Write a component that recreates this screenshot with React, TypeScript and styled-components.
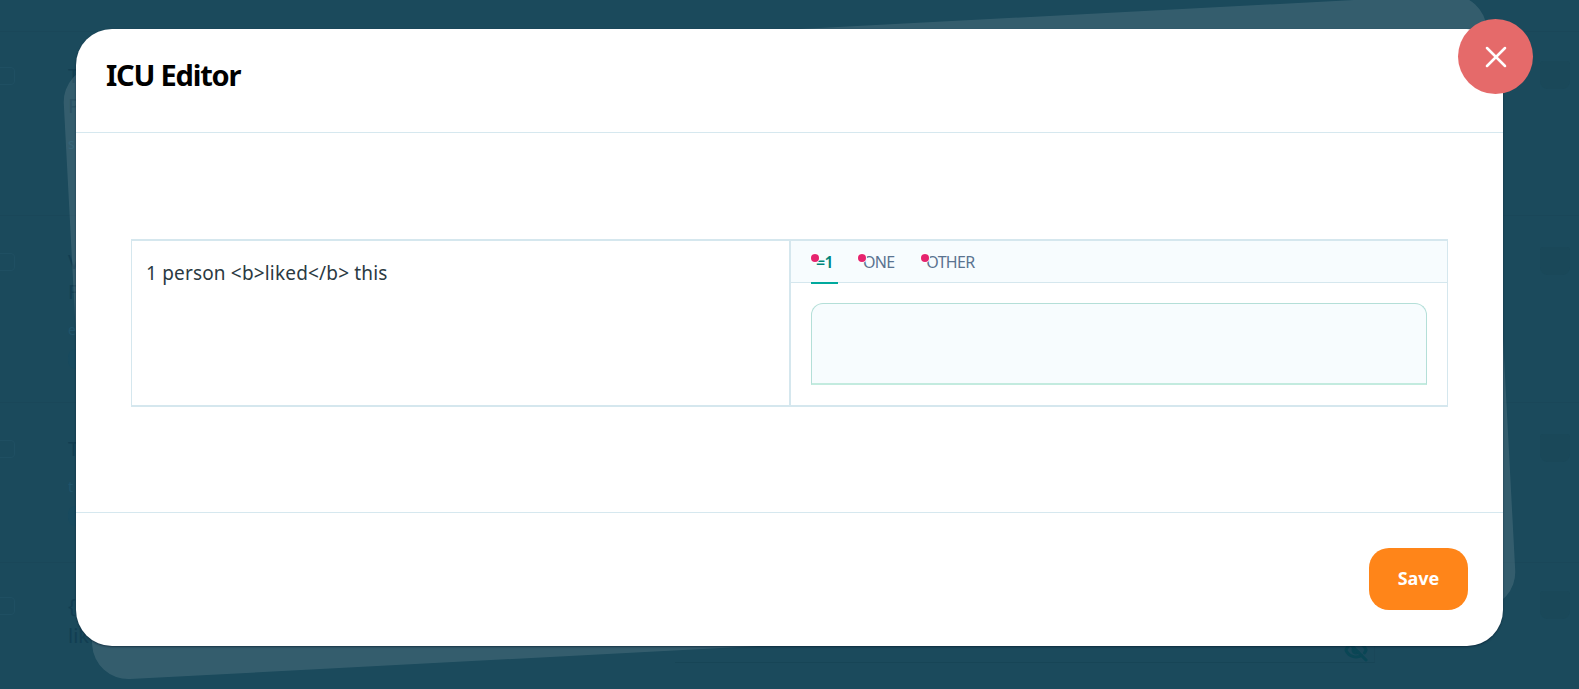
import React from "react";
import styled, { createGlobalStyle } from "styled-components";
import { X, EyeOff } from "lucide-react";

const Global = createGlobalStyle`
  html, body { margin: 0; padding: 0; height: 100%; overflow: hidden; background: #1b4a5c; }
  * { box-sizing: border-box; }
  body { font-family: "Noto Sans", "Open Sans", sans-serif; }
`;

const Page = styled.div`
  position: relative;
  width: 1579px;
  height: 689px;
  overflow: hidden;
  background: #1b4a5c;
`;

const BackList = styled.div`
  display: flex;
  flex-direction: column;
  height: 689px;
  padding-top: 31px;
  color: #123e52;
  font-size: 20px;
  line-height: 30px;
`;

const BackRow = styled.div<{ $h: number; $pad: number }>`
  display: grid;
  grid-template-columns: 68px 60px 1fr 30px;
  align-items: start;
  height: ${(p) => p.$h}px;
  padding: ${(p) => p.$pad}px 9px 0 0;
  border-top: 1px solid #1a4759;
`;

const BackCheck = styled.div`
  width: 30px;
  height: 18px;
  margin: 6px 0 0 -15px;
  border: 1px solid #1f4f62;
  border-radius: 4px;
`;

const BackBadge = styled.div`
  width: 30px;
  height: 28px;
  border-radius: 3px 3px 8px 8px;
  background: #1a4859;
`;

const BackMuted = styled.div`
  margin-top: 10px;
  font-size: 14px;
  line-height: 26px;
  color: #20546a;
`;

const BackPill = styled.div`
  width: 40px;
  height: 20px;
  margin-top: 6px;
  border-radius: 8px;
  background: #184a5e;
`;

const BackSplit = styled.div`
  display: flex;
`;

const BackPanel = styled.div`
  width: 700px;
  height: 100px;
  margin: -28px 165px 0 auto;
  padding-right: 6px;
  display: flex;
  align-items: flex-end;
  justify-content: flex-end;
  color: #0a4655;
  border-right: 1px solid #1a4759;
  border-bottom: 1px solid #174556;
`;

const Backdrop = styled.div`
  position: absolute;
  inset: 0;
  display: flex;
  align-items: flex-start;
  justify-content: center;
  padding-top: 29px;
`;

const Tilted = styled.div`
  position: absolute;
  left: 77px;
  top: 30px;
  width: 1425px;
  height: 614px;
  border-radius: 36px;
  background: rgba(255, 255, 255, 0.11);
  transform: rotate(-3deg);
`;

const Dialog = styled.div`
  position: relative;
  width: 1427px;
  height: 617px;
  background: #fff;
  border-radius: 36px;
  display: flex;
  flex-direction: column;
  box-shadow: 0 1px 2px rgba(0, 20, 40, 0.55);
`;

const Close = styled.button`
  position: absolute;
  top: -10px;
  right: -30px;
  width: 75px;
  height: 75px;
  border: 0;
  padding: 0;
  border-radius: 50%;
  background: #e56a6a;
  color: #fff;
  display: flex;
  align-items: center;
  justify-content: center;
`;

const Header = styled.header`
  height: 104px;
  flex: none;
  padding: 0 30px;
  display: flex;
  align-items: center;
  border-bottom: 1px solid #d6e8ef;
`;

const Title = styled.h2`
  margin: 0 0 12px;
  font-size: 29px;
  line-height: 40px;
  font-weight: 700;
  color: #000;
  letter-spacing: -1.2px;
`;

const Body = styled.main`
  flex: 1;
  padding: 106px 55px 0;
`;

const Editor = styled.section`
  display: grid;
  grid-template-columns: 659px 1fr;
  width: 1317px;
  height: 168px;
  border: 2px solid #d5e7ee;
  border-left-width: 1px;
  border-right-width: 1px;
`;

const Source = styled.div`
  padding: 19px 14px;
  font-size: 19px;
  line-height: 26px;
  color: #2b3a42;
  letter-spacing: 0.17px;
  border-right: 2px solid #d5e7ee;
`;

const Side = styled.div`
  display: flex;
  flex-direction: column;
`;

const Tabs = styled.div`
  height: 42px;
  flex: none;
  display: flex;
  gap: 20px;
  padding: 0 20px;
  background: #f7fcfe;
  border-bottom: 1px solid #d5e7ee;
`;

const Tab = styled.div<{ $active?: boolean }>`
  position: relative;
  height: 43px;
  padding: 0 ${(p) => (p.$active ? 5 : 7)}px 0 5px;
  font-size: 16px;
  line-height: 42px;
  letter-spacing: -0.7px;
  font-weight: ${(p) => (p.$active ? 600 : 400)};
  color: ${(p) => (p.$active ? "#00857a" : "#5a7390")};
  border-bottom: 2px solid ${(p) => (p.$active ? "#00a99d" : "transparent")};
`;

const Dot = styled.span`
  position: absolute;
  left: 0;
  top: 13px;
  width: 8px;
  height: 8px;
  border-radius: 50%;
  background: #e6246e;
  box-shadow: 0 0 0 1px #fff;
`;

const Field = styled.div`
  margin: 20px 20px 0;
  height: 82px;
  background: #f7fcfe;
  border: 1px solid #b4dfd8;
  border-bottom: 2px solid #c3ebdf;
  border-radius: 12px 12px 0 0;
`;

const Footer = styled.footer`
  height: 134px;
  flex: none;
  padding: 35px 35px 0 0;
  display: flex;
  justify-content: flex-end;
  align-items: flex-start;
  border-top: 1px solid #d6e8ef;
`;

const Save = styled.button`
  width: 99px;
  height: 62px;
  border: 0;
  padding: 0 0 2px;
  border-radius: 20px;
  background: #ff8519;
  color: #fff;
  font-family: inherit;
  font-size: 18px;
  font-weight: 700;
`;

export default function App() {
  return (
    <Page>
      <Global />
      <BackList>
        <BackRow $h={184} $pad={29}>
          <BackCheck />
          <div>
            <div>T</div>
            <div>P</div>
            <BackMuted>s</BackMuted>
          </div>
          <span />
          <BackBadge />
        </BackRow>
        <BackRow $h={187} $pad={31}>
          <BackCheck />
          <div>
            <div>V</div>
            <div>F</div>
            <BackMuted>e</BackMuted>
            <BackPill />
          </div>
          <span />
          <BackBadge />
        </BackRow>
        <BackRow $h={160} $pad={31}>
          <BackCheck />
          <div>
            <div>T</div>
            <BackMuted>t</BackMuted>
            <BackPill />
          </div>
          <span />
          <BackBadge />
        </BackRow>
        <BackRow $h={127} $pad={28}>
          <BackCheck />
          <div>
            <div>{"{"}</div>
            <div>lik</div>
          </div>
          <BackSplit>
            <BackPanel>
              <EyeOff size={24} strokeWidth={3} />
            </BackPanel>
          </BackSplit>
          <BackBadge />
        </BackRow>
      </BackList>
      <Backdrop>
        <Tilted />
        <Dialog>
          <Close aria-label="Close">
            <X size={36} strokeWidth={1.7} />
          </Close>
          <Header>
            <Title>ICU Editor</Title>
          </Header>
          <Body>
            <Editor>
              <Source>{"1 person <b>liked</b> this"}</Source>
              <Side>
                <Tabs>
                  <Tab $active>
                    <Dot />
                    =1
                  </Tab>
                  <Tab>
                    <Dot />
                    ONE
                  </Tab>
                  <Tab>
                    <Dot />
                    OTHER
                  </Tab>
                </Tabs>
                <Field />
              </Side>
            </Editor>
          </Body>
          <Footer>
            <Save>Save</Save>
          </Footer>
        </Dialog>
      </Backdrop>
    </Page>
  );
}
